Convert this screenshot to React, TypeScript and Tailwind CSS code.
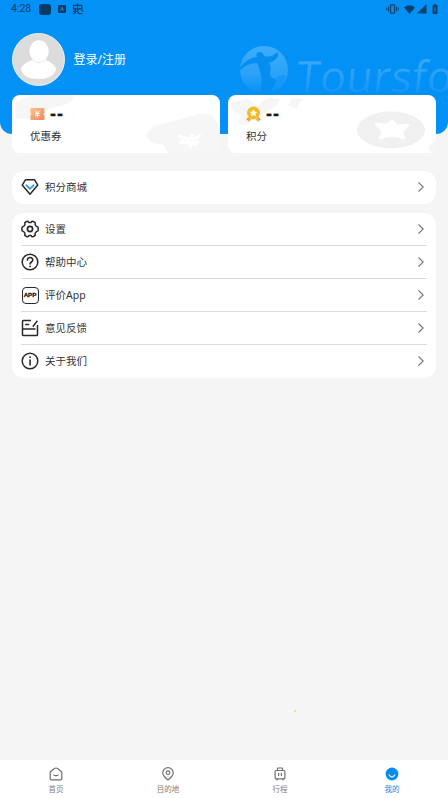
import React from "react";

const stroke = {
  fill: "none",
  stroke: "#292929",
  strokeWidth: 1.5,
  strokeLinecap: "round" as const,
  strokeLinejoin: "round" as const,
};

function DiamondIcon() {
  return (
    <svg className="h-[18px] w-[18px]" viewBox="0 0 18 18" {...stroke}>
      <path d="M4.6 1.7h8.8l3.4 5.4L9 16.2 1.2 7.1z" />
      <path d="M5.3 7.2 9 10.8l3.7-3.6" stroke="#2f9ce0" strokeWidth="1.7" />
    </svg>
  );
}

function SettingsIcon() {
  return (
    <svg className="h-[18px] w-[18px]" viewBox="0 0 18 18" {...stroke}>
      <path d="M5.6 1.5 7 1.3l1 1.3h2l1-1.3 1.5.3 1.7 1-.1 2 1.3 1.8 1.6.7.2 1.9-.2 1.9-1.6.7-1.3 1.8.1 2-1.7 1.1-1.5.2-1-1.3H8l-1 1.3-1.4-.2-1.8-1.1.2-2-1.3-1.8-1.6-.7L.9 9l.2-1.9 1.6-.7L4 4.6l-.2-2z" />
      <circle cx="9" cy="9" r="2.6" strokeWidth="1.7" />
    </svg>
  );
}

function HelpIcon() {
  return (
    <svg className="h-[18px] w-[18px]" viewBox="0 0 18 18" {...stroke}>
      <circle cx="9" cy="9" r="7.8" />
      <path d="M6.4 7.1c0-3.7 5.4-3.3 5.4-.1 0 2-2.7 2-2.7 4" strokeWidth="1.6" />
      <path d="M9.1 13.3v.1" strokeWidth="1.8" />
    </svg>
  );
}

function AppIcon() {
  return (
    <span className="flex h-[17px] w-[17px] items-center justify-center rounded-[4px] border-[1.5px] border-[#292929]">
      <span className="font-['Liberation_Sans',sans-serif] text-[6.2px] leading-none font-black text-[#222] [-webkit-text-stroke:0.3px_#222]">
        APP
      </span>
    </span>
  );
}

function FeedbackIcon() {
  return (
    <svg className="h-[18px] w-[18px]" viewBox="0 0 18 18" {...stroke} strokeLinecap="butt">
      <path d="M10 1.6H2.3q-.8 0-.8.8v13.3q0 .8.8.8h13.4q.8 0 .8-.8V6" />
      <path d="M4.2 5.6h4M2 9.9h12.5M11.8 7.8l4.6-6" />
    </svg>
  );
}

function AboutIcon() {
  return (
    <svg className="h-[18px] w-[18px]" viewBox="0 0 18 18" {...stroke}>
      <circle cx="9" cy="9" r="7.8" />
      <path d="M9.1 8v5" strokeWidth="1.6" />
      <path d="M9.1 5.1v.1" strokeWidth="1.8" />
    </svg>
  );
}

function Chevron() {
  return (
    <svg className="h-3 w-2" viewBox="0 0 8 12" fill="none" stroke="#777" strokeWidth="1.1">
      <path d="M1.5 1.5 6.2 6l-4.7 4.5" />
    </svg>
  );
}

function MenuRow({ icon, label, last }: { icon: React.ReactNode; label: string; last?: boolean }) {
  return (
    <div className={`flex h-[33px] items-center border-b pr-[2px] ${last ? "border-transparent" : "border-[#dcdcdc]"}`}>
      <span className="flex w-[18px] justify-center">{icon}</span>
      <span className="ml-[6px] flex-1 text-[10.5px] leading-4 text-[#333]">{label}</span>
      <Chevron />
    </div>
  );
}

function StatusBar() {
  return (
    <div className="flex h-[18px] items-center justify-between pr-[10px] pl-[11px] text-[#08416e]">
      <div className="flex items-center">
        <span className="w-[21px] pt-px font-[Roboto,sans-serif] text-[10.5px] leading-none">4:28</span>
        <span className="ml-[7px] h-[11px] w-3 rounded-[3px] bg-[#073c66]" />
        <svg className="ml-[7px] h-2 w-2" viewBox="0 0 8 8">
          <rect width="8" height="8" rx="1" fill="#073c66" />
          <path d="M2.5 6 4 2l1.5 4M3 4.8h2" fill="none" stroke="#2589cf" strokeWidth=".8" />
        </svg>
        <svg className="ml-[6px] h-3 w-3" viewBox="0 0 12 12" fill="none" stroke="#08416e" strokeWidth="1.2">
          <path d="M1.5 2.3h8.3v3.5H1.5zM5.7.4v8M1 8.3h5M3.4 6v4.5M5.8 8.5q0 2.6 4.8 2.2M10 6.8l.8 2M1.2 10.8l2.2-1.6" />
        </svg>
      </div>
      <div className="flex items-center">
        <svg className="h-[10px] w-[13px]" viewBox="0 0 13 10" fill="none" stroke="currentColor">
          <rect x="4.5" y=".8" width="4" height="8.4" rx=".5" strokeWidth="1.2" />
          <path d="M2.5 2.5v5M.7 3.7v2.6M10.5 2.5v5M12.3 3.7v2.6" />
        </svg>
        <svg className="ml-[5px] h-[9px] w-[11px]" viewBox="0 0 11 9" fill="currentColor">
          <path d="M0 2.4Q5.5-2 11 2.4L5.5 9z" />
        </svg>
        <svg className="ml-[2px] h-[10px] w-[10px]" viewBox="0 0 10 10" fill="currentColor">
          <path d="M9.5 0v9.5H0z" />
        </svg>
        <svg className="ml-[5px] h-[10px] w-[6px]" viewBox="0 0 6 10">
          <path d="M2 0h2v1h1.5v9H.5V1H2z" fill="currentColor" />
          <path d="M3.4 3 2.2 5.6h1.5L2.7 8" fill="none" stroke="#2589cf" strokeWidth=".7" />
        </svg>
      </div>
    </div>
  );
}

function Watermark() {
  return (
    <div className="absolute top-[45px] left-[240px] flex items-start">
      <svg className="h-[50px] w-12 shrink-0" viewBox="0 0 48 50">
        <defs>
          <linearGradient id="globe" x1="0" y1="0" x2="0" y2="1">
            <stop offset="0" stopColor="#3fadfa" />
            <stop offset=".6" stopColor="#2aa2f8" />
            <stop offset="1" stopColor="#0391f5" />
          </linearGradient>
        </defs>
        <circle cx="24" cy="25" r="24" fill="url(#globe)" />
        <path
          d="M0 23Q7 13 17 12q-2-4 2-5 4 0 5 4 8 2 13-4l1.5 3Q36 16 29 18q3 4 1 9-1 6 7 8l-7 13-9-2Q23 30 17 18 8 18 0 25z"
          fill="#058ef0"
        />
        <path d="M36 34q2-4 10-4-2 9-9 13z" fill="#1699f6" />
      </svg>
      <span className="mt-[1px] ml-[9px] h-[54px] -skew-x-6 bg-gradient-to-b from-[#3aabfb] from-20% to-[#0892f5] to-95% bg-clip-text pr-2 font-['Open_Sans',sans-serif] text-[43px] leading-[60px] font-normal tracking-[0.4px] text-transparent">
        Toursfo
      </span>
    </div>
  );
}

function CouponArt() {
  return (
    <svg className="absolute inset-0 h-full w-full" viewBox="0 0 208 58" fill="#f6f6f6">
      <path d="M3 8Q14 0 28 0h33q2 6-8 9l-18 6-8-2-4 10-19 1z" />
      <path d="M135 42q-3-4 8-11l44-12q10-2 14 3l7 9v27h-52l-4-8-12-2z" />
      <path d="m166 41 13 4 10-5M167 48l20-1M178 53l2-14M168 46l17 4" fill="none" stroke="#fff" strokeWidth="3" />
    </svg>
  );
}

function PointsArt() {
  return (
    <svg className="absolute inset-0 h-full w-full" viewBox="0 0 208 58" fill="#f6f6f6">
      <path d="m2 8 16-4q8 2 11 8 6-8 12-9l11 1q-2 8-14 13l-8 4 4 8-9-4-9 6-7-4 5-8Q4 20 2 8z" />
      <path d="m60 10 4-7 12 1-6 5 1 5-7-2z" />
      <ellipse cx="163" cy="35" rx="34" ry="18.5" fill="#f0f0f0" />
      <path
        d="m164 26 5 5 11-1-6 6 2 7-12-3-12 3 3-7-7-7 11 1z"
        fill="#fff"
        stroke="#fff"
        strokeWidth="2.5"
        strokeLinejoin="round"
      />
      <path d="m200 52 8-7v13l-6-2z" />
    </svg>
  );
}

function CouponIcon() {
  return (
    <svg className="h-3 w-[15px]" viewBox="0 0 15 12">
      <defs>
        <linearGradient id="coupon" x1="0" y1="0" x2="1" y2="1">
          <stop stopColor="#f6c58c" />
          <stop offset="1" stopColor="#ee8761" />
        </linearGradient>
      </defs>
      <path d="M1 0h12.5q1 0 1 1v3.9q-2 1.1 0 2.2V11q0 1-1 1H1.3q-1 0-1-1V7.1q2-1.1 0-2.2V1q0-1 .7-1z" fill="url(#coupon)" />
      <path d="m5.4 2.8 2 2.4 2-2.4M5.1 5.4h4.6M5.1 7.3h4.6M7.4 5.2v4.2" fill="none" stroke="#fff" />
    </svg>
  );
}

function MedalIcon() {
  return (
    <svg className="h-4 w-[15px]" viewBox="0 0 15 16">
      <path d="m2 11 3 2-2 3-.7-1.5L0 14zM13 11l-3 2 2 3 .7-1.5 2.3-.5z" fill="#e8aa32" />
      <circle cx="7.5" cy="7" r="6.5" fill="#f1bc27" />
      <path d="m7.5 3.2 1.2 2.3 2.6.4-1.9 1.8.5 2.6-2.4-1.2-2.3 1.2.4-2.6-1.8-1.8 2.5-.4z" fill="#fff" />
    </svg>
  );
}

function BalanceCard({ icon, label, art }: { icon: React.ReactNode; label: string; art: React.ReactNode }) {
  return (
    <div className="relative h-[58px] flex-1 overflow-hidden rounded-[8px] bg-white">
      {art}
      <div className="relative pt-[11px] pl-[18px]">
        <div className="flex h-4 items-center gap-[5px]">
          {icon}
          <span className="font-['Liberation_Sans',sans-serif] text-[18px] leading-none font-bold tracking-[1px] text-[#1b1b1b] [-webkit-text-stroke:0.3px_#1b1b1b]">
            --
          </span>
        </div>
        <div className="mt-[6px] text-[10.5px] leading-4 text-[#333]">{label}</div>
      </div>
    </div>
  );
}

function Tab({ icon, label, active }: { icon: React.ReactNode; label: string; active?: boolean }) {
  return (
    <div className={`flex flex-1 flex-col items-center pt-[7px] ${active ? "text-[#068de9]" : "text-[#808080]"}`}>
      <svg className="h-[14px] w-[14px]" viewBox="0 0 14 14" fill="none" stroke={active ? "none" : "#707070"} strokeWidth="1.2" strokeLinejoin="round">
        {icon}
      </svg>
      <span className="mt-[2px] text-[7.5px] leading-3">{label}</span>
    </div>
  );
}

export default function App() {
  return (
    <div className="flex h-[798px] w-full flex-col overflow-hidden bg-[#f5f5f5] font-['Noto_Sans','Noto_Sans_CJK_SC',sans-serif]">
      <header className="relative h-[134px] shrink-0 overflow-hidden rounded-b-[12px] bg-[#0391f5]">
        <StatusBar />
        <Watermark />
        <div className="mt-[15px] ml-3 flex h-[53px] items-center">
          <svg className="h-[53px] w-[53px]" viewBox="0 0 53 53">
            <circle cx="26.5" cy="26.5" r="26" fill="#dcdcdc" stroke="#e9f2f5" />
            <path d="M9 36q1-5 11-9 7 6 14 0 9 4 10 9-2 10-17.5 10T9 36z" fill="#fff" />
            <ellipse cx="27" cy="18.3" rx="9.7" ry="11" fill="#fff" />
          </svg>
          <span className="ml-[8.5px] text-[12px] leading-4 text-white">登录/注册</span>
        </div>
      </header>

      <section className="relative mx-3 -mt-[39px] flex shrink-0 gap-2">
        <BalanceCard icon={<CouponIcon />} label="优惠券" art={<CouponArt />} />
        <BalanceCard icon={<MedalIcon />} label="积分" art={<PointsArt />} />
      </section>

      <section className="mx-3 mt-[18px] shrink-0 rounded-[12px] bg-white px-[9px]">
        <MenuRow icon={<DiamondIcon />} label="积分商城" last />
      </section>

      <section className="mx-3 mt-[9px] shrink-0 rounded-[12px] bg-white px-[9px]">
        <MenuRow icon={<SettingsIcon />} label="设置" />
        <MenuRow icon={<HelpIcon />} label="帮助中心" />
        <MenuRow icon={<AppIcon />} label="评价App" />
        <MenuRow icon={<FeedbackIcon />} label="意见反馈" />
        <MenuRow icon={<AboutIcon />} label="关于我们" last />
      </section>

      <div className="flex-1">
        <div className="mt-[332px] ml-[294px] h-[2px] w-[2px] rounded-full bg-[#e8e05a]" />
      </div>

      <nav className="flex h-[38px] shrink-0 bg-white">
        <Tab label="首页" icon={<path d="M1.2 5 5.5 1.5q1.5-1 3 0L12.8 5v6.5q0 1.3-1.3 1.3h-9q-1.3 0-1.3-1.3zM4.5 8q2.5 1.2 5 0" />} />
        <Tab
          label="目的地"
          icon={
            <>
              <path d="M7 13Q1.8 9 1.8 5.8a5.2 5.2 0 0 1 10.4 0Q12.2 9 7 13z" />
              <circle cx="7" cy="5.7" r="1.8" />
            </>
          }
        />
        <Tab
          label="行程"
          icon={
            <>
              <rect x="2.1" y="3.5" width="9.8" height="8.3" rx="1.3" />
              <path d="M4.5 3.3V1h5v2.3M5.6 6v3M8.4 6v3M4 12v1.5M10 12v1.5" />
            </>
          }
        />
        <Tab
          active
          label="我的"
          icon={
            <>
              <circle cx="7" cy="7" r="6.4" fill="#068de9" />
              <path d="M4.2 8q2.8 4 5.6 0" stroke="#fff" strokeWidth="1.2" strokeLinecap="round" />
            </>
          }
        />
      </nav>
    </div>
  );
}
